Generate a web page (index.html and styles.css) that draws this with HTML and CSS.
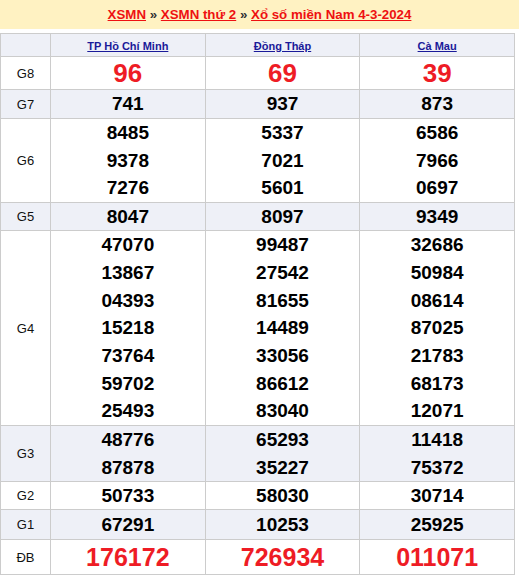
FILE: index.html
```html
<!DOCTYPE html>
<html lang="vi">
<head>
<meta charset="utf-8">
<link rel="stylesheet" href="styles.css">
</head>
<body>
<div class="title">
  <a href="#">XSMN</a> <span class="sep">»</span> <a href="#">XSMN thứ 2</a> <span class="sep">»</span> <a href="#">Xổ số miền Nam 4-3-2024</a>
</div>
<table class="kq">
  <tr class="head shade">
    <td class="lbl"></td>
    <td><a href="#">TP Hồ Chí Minh</a></td>
    <td><a href="#">Đồng Tháp</a></td>
    <td><a href="#">Cà Mau</a></td>
  </tr>
  <tr class="r-g8">
    <td class="lbl">G8</td>
    <td class="big">96</td><td class="big">69</td><td class="big">39</td>
  </tr>
  <tr class="r-g7 shade">
    <td class="lbl">G7</td>
    <td class="num">741</td><td class="num">937</td><td class="num">873</td>
  </tr>
  <tr class="r-g6">
    <td class="lbl">G6</td>
    <td class="num"><div>8485</div><div>9378</div><div>7276</div></td>
    <td class="num"><div>5337</div><div>7021</div><div>5601</div></td>
    <td class="num"><div>6586</div><div>7966</div><div>0697</div></td>
  </tr>
  <tr class="r-g5 shade">
    <td class="lbl">G5</td>
    <td class="num">8047</td><td class="num">8097</td><td class="num">9349</td>
  </tr>
  <tr class="r-g4">
    <td class="lbl">G4</td>
    <td class="num"><div>47070</div><div>13867</div><div>04393</div><div>15218</div><div>73764</div><div>59702</div><div>25493</div></td>
    <td class="num"><div>99487</div><div>27542</div><div>81655</div><div>14489</div><div>33056</div><div>86612</div><div>83040</div></td>
    <td class="num"><div>32686</div><div>50984</div><div>08614</div><div>87025</div><div>21783</div><div>68173</div><div>12071</div></td>
  </tr>
  <tr class="r-g3 shade">
    <td class="lbl">G3</td>
    <td class="num"><div>48776</div><div>87878</div></td>
    <td class="num"><div>65293</div><div>35227</div></td>
    <td class="num"><div>11418</div><div>75372</div></td>
  </tr>
  <tr class="r-g2">
    <td class="lbl">G2</td>
    <td class="num">50733</td><td class="num">58030</td><td class="num">30714</td>
  </tr>
  <tr class="r-g1 shade">
    <td class="lbl">G1</td>
    <td class="num">67291</td><td class="num">10253</td><td class="num">25925</td>
  </tr>
  <tr class="r-db">
    <td class="lbl">ĐB</td>
    <td class="db">176172</td><td class="db">726934</td><td class="db">011071</td>
  </tr>
</table>
</body>
</html>
```

FILE: styles.css
```css
html, body {
  margin: 0;
  padding: 0;
  background: #ffffff;
  font-family: "Liberation Sans", Arial, sans-serif;
}

.title {
  height: 29px;
  line-height: 30px;
  background: #fff2c2;
  text-align: center;
  font-size: 13.3px;
  font-weight: bold;
  color: #333333;
}

.title a {
  color: #ee1111;
  text-decoration: underline;
}

.title .sep {
  color: #333333;
}

.kq {
  margin-top: 4px;
  width: 515px;
  border-collapse: collapse;
  table-layout: fixed;
}

.kq td {
  border: 1px solid #cccccc;
  text-align: center;
  vertical-align: middle;
  padding: 0;
  color: #000000;
}

.kq td.lbl {
  width: 49px;
  font-size: 13px;
  color: #111111;
}

.shade td {
  background: #eef0f7;
}

.head {
  height: 23px;
}

.head a {
  font-size: 11px;
  font-weight: bold;
  color: #1a1a99;
  text-decoration: underline;
}

.num {
  font-size: 19px;
  font-weight: bold;
}

.num div {
  line-height: 27.7px;
}

.big {
  font-size: 26px;
  font-weight: bold;
  color: #ee1c25 !important;
}

.db {
  font-size: 25px;
  font-weight: bold;
  color: #ee1c25 !important;
}

.r-g8 { height: 33px; }
.r-g7 { height: 29px; }
.r-g5 { height: 28px; }
.r-g2 { height: 28px; }
.r-g1 { height: 30px; }
.r-db { height: 35px; }
```
